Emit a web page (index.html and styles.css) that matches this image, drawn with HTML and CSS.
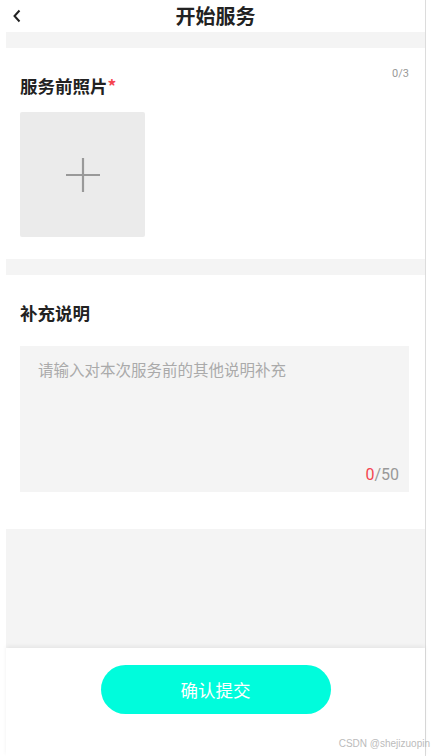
FILE: index.html
```html
<!DOCTYPE html>
<html lang="zh-CN">
<head>
    <meta charset="UTF-8">
    <meta name="viewport" content="width=device-width, initial-scale=1.0">
    <title>开始服务</title>
    <link rel="stylesheet" href="styles.css">
</head>
<body>

<div class="app">
    <div class="nav">
        <span class="nav-back">
            <svg width="10" height="14" viewBox="0 0 10 14"><path d="M7.5 1.5 L2.5 7 L7.5 12.5" fill="none" stroke="#222" stroke-width="2"/></svg>
        </span>
        <h1 class="nav-title">开始服务</h1>
    </div>

    <div class="gap"></div>

    <div class="section photo-section">
        <div class="section-head">
            <h3 class="section-title">服务前照片<span class="required">*</span></h3>
            <span class="photo-count">0/3</span>
        </div>
        <div class="upload">
            <svg width="36" height="36" viewBox="0 0 36 36"><path d="M18 1 V35 M1 18 H35" stroke="#999" stroke-width="2.2"/></svg>
        </div>
    </div>

    <div class="gap"></div>

    <div class="section remark-section">
        <h3 class="section-title">补充说明</h3>
        <div class="remark-box">
            <div class="placeholder">请输入对本次服务前的其他说明补充</div>
            <div class="remark-count"><span class="red">0</span>/50</div>
        </div>
    </div>

    <div class="filler"></div>

    <div class="footer">
        <button class="submit">确认提交</button>
    </div>
</div>

<div class="watermark">CSDN @shejizuopin</div>

</body>
</html>
```

FILE: styles.css
```css
body {
    margin: 0;
    padding: 0;
    background: #fff;
    font-family: "Noto Sans CJK SC", "Noto Sans", sans-serif;
    color: #222;
}

.app {
    margin-left: 6px;
    width: 419px;
    min-height: 756px;
    border-right: 1px solid #dcdcdc;
    display: flex;
    flex-direction: column;
}

.nav {
    height: 32px;
    display: flex;
    align-items: center;
    justify-content: center;
    position: relative;
}

.nav-back {
    position: absolute;
    left: 6px;
    top: 9px;
    line-height: 0;
}

.nav-title {
    margin: 0;
    font-size: 20px;
    font-weight: bold;
    line-height: 28px;
}

.gap {
    height: 16px;
    background: #f4f4f4;
}

.section {
    padding: 0 16px 0 14px;
}

.photo-section {
    padding-top: 19px;
    padding-bottom: 22px;
}

.section-head {
    display: flex;
    justify-content: space-between;
    align-items: flex-start;
}

.section-title {
    margin: 0;
    font-size: 17.5px;
    font-weight: bold;
    line-height: 24px;
}

.photo-section .section-title {
    margin-top: 7px;
}

.required {
    color: #f5444f;
}

.photo-count {
    font-size: 11px;
    line-height: 14px;
    color: #999;
    font-family: Roboto, sans-serif;
}

.upload {
    margin-top: 14px;
    width: 125px;
    height: 125px;
    background: #ebebeb;
    border-radius: 2px;
    display: flex;
    align-items: center;
    justify-content: center;
}

.remark-section {
    padding-top: 26px;
    padding-bottom: 37px;
}

.remark-box {
    margin-top: 21px;
    height: 146px;
    background: #f4f4f4;
    padding: 12px 10px 0 18px;
    box-sizing: border-box;
    display: flex;
    flex-direction: column;
}

.placeholder {
    font-size: 15.5px;
    line-height: 22px;
    color: #aaa;
}

.remark-count {
    margin-top: auto;
    margin-bottom: 7px;
    text-align: right;
    font-family: Roboto, sans-serif;
    font-size: 16px;
    line-height: 20px;
    color: #999;
}

.red {
    color: #f5444f;
}

.filler {
    height: 119px;
    background: #f4f4f4;
}

.footer {
    flex: 1;
    padding-top: 17px;
    display: flex;
    justify-content: center;
    align-items: flex-start;
    box-shadow: 0 -2px 4px rgba(0, 0, 0, 0.06);
}

.submit {
    width: 230px;
    height: 49px;
    border: none;
    border-radius: 25px;
    background: #00fcdc;
    color: #fff;
    font-size: 17.5px;
    font-family: "Noto Sans CJK SC", sans-serif;
}

.watermark {
    position: absolute;
    right: 4px;
    top: 738px;
    font-family: "Liberation Sans", Arial, sans-serif;
    font-size: 10px;
    color: #bbb;
}
```
